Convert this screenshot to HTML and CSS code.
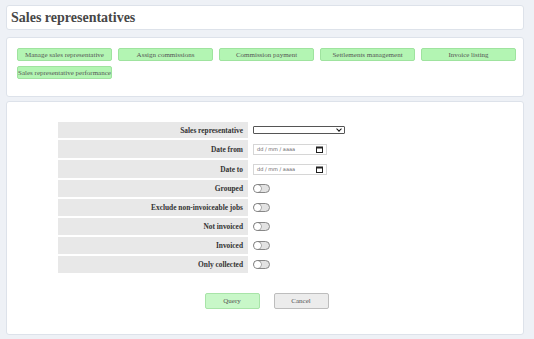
FILE: index.html
```html
<!DOCTYPE html>
<html lang="en">
  <head>
    <meta charset="UTF-8" />
    <title>Sales representatives</title>
    <link rel="stylesheet" href="styles.css">
  </head>
  <body>
    <div class="page">
      <!-- Title -->
      <div class="panel header">
        <h1>Sales representatives</h1>
      </div>

      <!-- Navigation -->
      <div class="panel nav">
        <button class="nav-btn">Manage sales representative</button>
        <button class="nav-btn">Assign commissions</button>
        <button class="nav-btn">Commission payment</button>
        <button class="nav-btn">Settlements management</button>
        <button class="nav-btn">Invoice listing</button>
        <button class="nav-btn">Sales representative performance</button>
      </div>

      <!-- Filter form -->
      <div class="panel content">
        <div class="form">
          <div class="label">Sales representative</div>
          <div class="field">
            <div class="select"><span class="chevron"></span></div>
          </div>

          <div class="label">Date from</div>
          <div class="field">
            <div class="date">
              <span>dd / mm / aaaa</span>
              <svg width="7" height="7" viewBox="0 0 7 7">
                <rect x="0.5" y="1" width="6" height="5.5" fill="none" stroke="#222" stroke-width="1" />
                <rect x="0.5" y="1" width="6" height="1.5" fill="#222" />
              </svg>
            </div>
          </div>

          <div class="label">Date to</div>
          <div class="field">
            <div class="date">
              <span>dd / mm / aaaa</span>
              <svg width="7" height="7" viewBox="0 0 7 7">
                <rect x="0.5" y="1" width="6" height="5.5" fill="none" stroke="#222" stroke-width="1" />
                <rect x="0.5" y="1" width="6" height="1.5" fill="#222" />
              </svg>
            </div>
          </div>

          <div class="label">Grouped</div>
          <div class="field"><span class="toggle"></span></div>

          <div class="label">Exclude non-invoiceable jobs</div>
          <div class="field"><span class="toggle"></span></div>

          <div class="label">Not invoiced</div>
          <div class="field"><span class="toggle"></span></div>

          <div class="label">Invoiced</div>
          <div class="field"><span class="toggle"></span></div>

          <div class="label">Only collected</div>
          <div class="field"><span class="toggle"></span></div>
        </div>

        <div class="actions">
          <button class="btn-query">Query</button>
          <button class="btn-cancel">Cancel</button>
        </div>
      </div>
    </div>
  </body>
</html>
```

FILE: styles.css
```css
* {
  box-sizing: border-box;
}
html,
body {
  margin: 0;
  padding: 0;
  height: 100%;
  background-color: #eef1f6;
  font-family: "Liberation Serif", "Times New Roman", serif;
  color: #333;
  overflow: hidden;
}
.page {
  padding: 5px 10px 0 6px;
  display: flex;
  flex-direction: column;
}
.panel {
  background-color: #ffffff;
  border: 1px solid #dde2ea;
  border-radius: 3px;
}
.header {
  height: 25px;
  display: flex;
  align-items: center;
  padding-left: 4px;
}
.header h1 {
  margin: 0;
  font-size: 14px;
  font-weight: bold;
  color: #474747;
}

/* Navigation buttons */
.nav {
  margin-top: 7px;
  height: 60px;
  padding: 10px 0 0 10px;
  display: flex;
  flex-wrap: wrap;
  align-content: flex-start;
  column-gap: 6px;
  row-gap: 5px;
}
.nav-btn {
  width: 95px;
  height: 13px;
  padding: 0;
  border: 1px solid #9fe39f;
  border-radius: 2px;
  background-color: #b3f5b3;
  color: #555;
  font-family: inherit;
  font-size: 7px;
  white-space: nowrap;
  overflow: hidden;
}

/* Form */
.content {
  margin-top: 4px;
  height: 234px;
  padding-top: 20px;
}
.form {
  width: 417px;
  margin-left: 51px;
  display: grid;
  grid-template-columns: 190px 1fr;
  grid-template-rows: 16px 18px 18px repeat(5, 17px);
  row-gap: 2px;
}
.label {
  background-color: #e8e8e8;
  font-size: 7.4px;
  font-weight: bold;
  color: #333;
  padding-right: 5px;
  display: flex;
  align-items: center;
  justify-content: flex-end;
}
.field {
  display: flex;
  align-items: center;
  padding-left: 5px;
}
.select {
  width: 92px;
  height: 8px;
  border: 1px solid #555;
  border-radius: 1px;
  position: relative;
}
.chevron {
  position: absolute;
  right: 3px;
  top: 0;
  width: 4px;
  height: 4px;
  border-right: 1.5px solid #111;
  border-bottom: 1.5px solid #111;
  transform: rotate(45deg);
}
.date {
  width: 74px;
  height: 11px;
  border: 1px solid #d6d6d6;
  display: flex;
  align-items: center;
  justify-content: space-between;
  padding: 0 3px;
  font-family: "DejaVu Sans", sans-serif;
  font-size: 5px;
  color: #666;
}
.toggle {
  width: 17px;
  height: 9px;
  border: 1px solid #888;
  border-radius: 5px;
  background-color: #e2e2e2;
  position: relative;
}
.toggle::before {
  content: "";
  position: absolute;
  left: 0;
  top: 0;
  width: 7px;
  height: 7px;
  border-radius: 50%;
  background-color: #ffffff;
  box-shadow: 0 0 0 0.5px #777;
}

/* Actions */
.actions {
  display: flex;
  justify-content: center;
  gap: 14px;
  margin-top: 20px;
  padding-left: 3px;
}
.actions button {
  width: 55px;
  height: 16px;
  border-radius: 2px;
  font-family: inherit;
  font-size: 7px;
  color: #555;
  padding: 0;
}
.btn-query {
  background-color: #c8f7c8;
  border: 1px solid #a8e4a8;
}
.btn-cancel {
  background-color: #ececec;
  border: 1px solid #bdbdbd;
}
```
